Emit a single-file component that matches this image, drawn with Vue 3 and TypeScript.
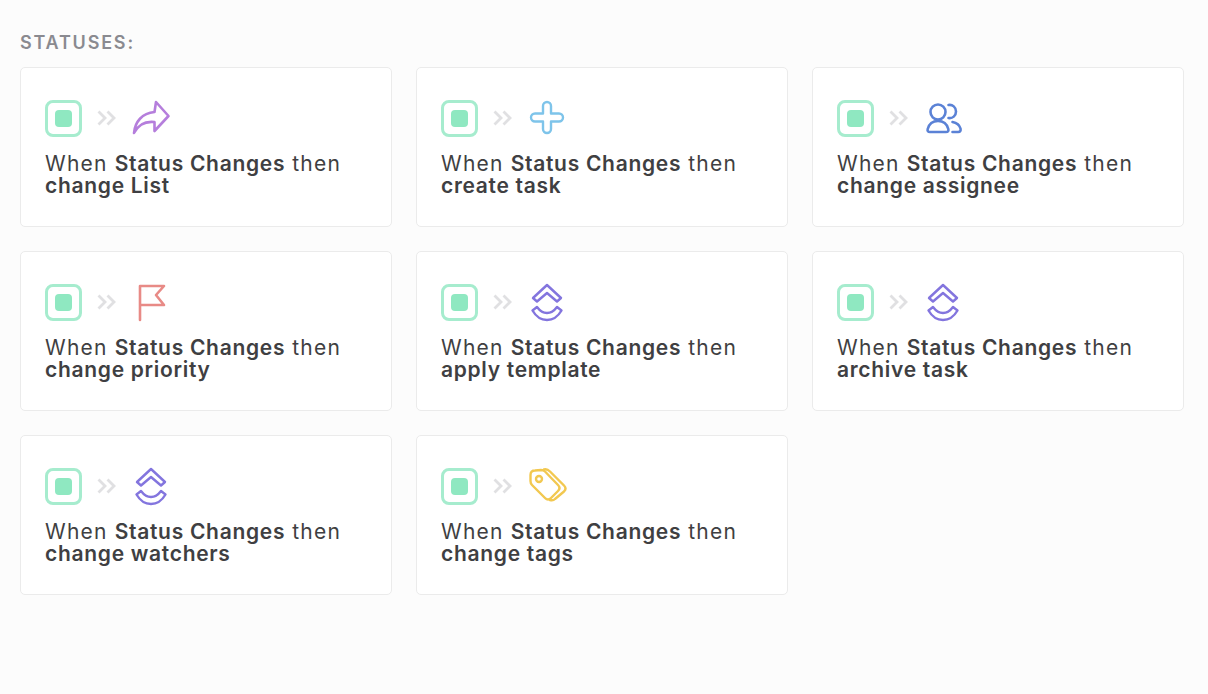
<script setup lang="ts">
type IconName = 'share' | 'plus' | 'users' | 'flag' | 'clickup' | 'tags'
interface Item { action: string; icon: IconName }

const items: Item[] = [
  { action: 'change List', icon: 'share' },
  { action: 'create task', icon: 'plus' },
  { action: 'change assignee', icon: 'users' },
  { action: 'change priority', icon: 'flag' },
  { action: 'apply template', icon: 'clickup' },
  { action: 'archive task', icon: 'clickup' },
  { action: 'change watchers', icon: 'clickup' },
  { action: 'change tags', icon: 'tags' },
]
</script>

<template>
  <main class="page">
    <h2 class="heading">STATUSES:</h2>
    <section class="grid">
      <article v-for="item in items" :key="item.action" class="card">
        <div class="flow">
          <span class="status"><span class="status-dot"></span></span>
          <svg class="chevrons" width="20" height="16" viewBox="0 0 20 16" fill="none" stroke="#e0e0e2" stroke-width="2.8">
            <path d="M1.5 1.5 8 8l-6.500 6.500" />
            <path d="M10.500 1.500 17 8l-6.500 6.500" />
          </svg>
          <svg class="icon" width="40" height="40" viewBox="0 0 40 40" fill="none" stroke-linejoin="round" stroke-linecap="round">
            <g v-if="item.icon === 'share'" stroke="#b57edc" stroke-width="2.600">
              <path d="M3 35C4 24 11 15 23.500 14L25 4 37.500 18 23.500 33V24C14 23 7 27 3 35Z" />
            </g>
            <g v-else-if="item.icon === 'plus'" stroke="#7ec4ea" stroke-width="2.400">
              <path d="M16 8a4 4 0 0 1 8 0v7.500h8a4 4 0 0 1 0 8h-8V31a4 4 0 0 1-8 0v-7.500H8a4 4 0 0 1 0-8h8Z" />
            </g>
            <g v-else-if="item.icon === 'users'" stroke="#5b82d6" stroke-width="2.600">
              <circle cx="15" cy="14" r="7.500" />
              <path d="M7 34h16c2 0 2.800-1.200 2.300-3-1.300-5-5-8-10.300-8S6 26 4.700 31c-.5 1.800.3 3 2.300 3Z" />
              <path d="M25.500 7c4-.7 7.500 2.200 7.500 6.500s-3.500 7.200-7.500 6.500" />
              <path d="M29.500 24c4 .8 7 3 8 6.500.5 2-.3 3.500-2.300 3.500h-5.700" />
            </g>
            <g v-else-if="item.icon === 'flag'" stroke="#e88a86" stroke-width="2.600">
              <path d="M9 38V4H33L25 13 33 23H9" />
            </g>
            <g v-else-if="item.icon === 'clickup'" stroke="#8375de" stroke-width="2.400">
              <path d="M20 3 34 16 30 19.500 20 11 10 19.500 6 16Z" />
              <path d="M10 25C13 29 16 31 20 31s7-2 10-6l4.500 3.500C31 34.500 26 38 20 38S9 34.500 5.500 28.500Z" />
            </g>
            <g v-else stroke="#f2c850" stroke-width="2.400">
              <path d="M8 4.500 14 4c2 0 3 .5 4 1.500L31 19c2 2 2 4 0 6l-7 7c-2 2-4 2-6 0L5 19c-1-1-1.500-2-1.500-4V9C3.500 6 5 4.500 8 4.500Z" />
              <circle cx="12" cy="13" r="3" />
              <path d="M17 3.500c2-.5 4 0 6 2L37 19.500c2 2 2 4 0 6L28 33c-1.500 1.500-3 1.500-5 1" />
            </g>
          </svg>
        </div>
        <p class="text">When <b>Status Changes</b> then<br /><b>{{ item.action }}</b></p>
      </article>
    </section>
  </main>
</template>

<style>
html, body { background: #fcfcfc; }
</style>

<style scoped>
.page {
  box-sizing: border-box;
  min-height: 694px;
  padding: 32px 23px 0 20px;
  background: #fcfcfc;
  font-family: Inter, "Liberation Sans", sans-serif;
}
.heading {
  margin: 0 0 14px;
  font-size: 18px;
  line-height: 21px;
  font-weight: 600;
  letter-spacing: 1.800px;
  color: #8a8a90;
}
.grid {
  display: grid;
  grid-template-columns: repeat(3, 372px);
  grid-auto-rows: 160px;
  gap: 24px;
}
.card {
  box-sizing: border-box;
  padding: 30px 24px 0;
  background: #fff;
  border: 1px solid #ebebeb;
  border-radius: 5px;
}
.flow {
  display: flex;
  align-items: center;
  height: 40px;
}
.status {
  box-sizing: border-box;
  display: flex;
  align-items: center;
  justify-content: center;
  width: 37px;
  height: 37px;
  border: 3px solid #a6ecce;
  border-radius: 8px;
}
.status-dot {
  width: 17px;
  height: 17px;
  border-radius: 4px;
  background: #8fe8c1;
}
.chevrons { margin-left: 15px; flex: none; }
.icon { margin-left: 14px; flex: none; }
.text {
  margin: 15px 0 0;
  font-size: 21px;
  line-height: 22px;
  letter-spacing: 1.200px;
  color: #3f3f42;
  white-space: nowrap;
}
.text b { font-weight: 600; letter-spacing: 0.700px; }
</style>
